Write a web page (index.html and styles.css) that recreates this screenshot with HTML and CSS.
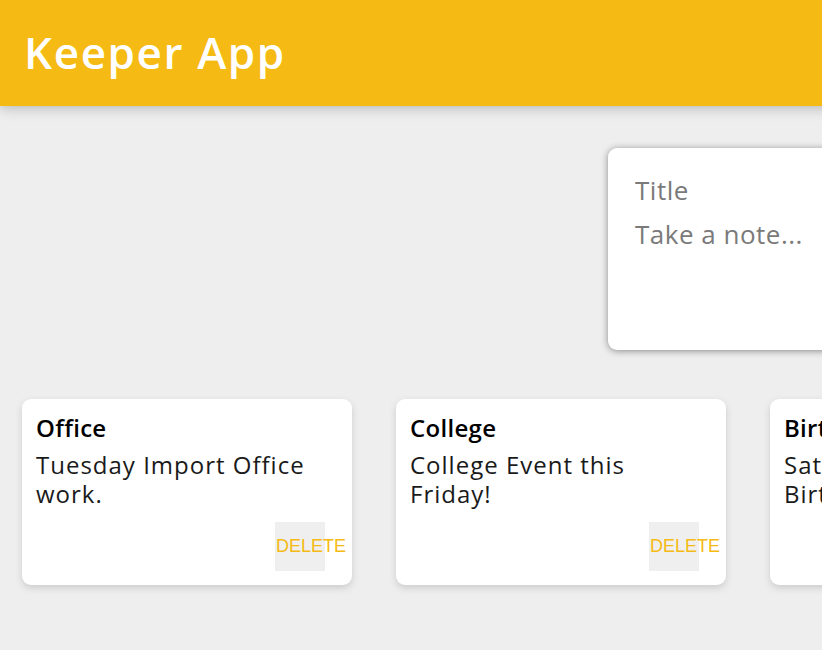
FILE: index.html
```html
<!DOCTYPE html>
<html lang="en">
<head>
<meta charset="utf-8">
<title>Keeper App</title>
<link rel="stylesheet" href="styles.css">
</head>
<body>
<div class="app">
  <header class="header">
    <h1 class="logo">Keeper App</h1>
  </header>
  <form class="create-note">
    <input class="create-title" name="title" placeholder="Title">
    <textarea class="create-content" name="content" placeholder="Take a note..." rows="3"></textarea>
  </form>
  <div class="notes">
    <div class="note">
      <h1 class="note-title">Office</h1>
      <p class="note-text">Tuesday Import Office work.</p>
      <div class="note-actions"><button class="delete" type="button">DELETE</button></div>
    </div>
    <div class="note">
      <h1 class="note-title">College</h1>
      <p class="note-text">College Event this Friday!</p>
      <div class="note-actions"><button class="delete" type="button">DELETE</button></div>
    </div>
    <div class="note">
      <h1 class="note-title">Birthday</h1>
      <p class="note-text">Saturday Friend's Birthday Party.</p>
      <div class="note-actions"><button class="delete" type="button">DELETE</button></div>
    </div>
  </div>
</div>
</body>
</html>
```
FILE: styles.css
```css
* {
  margin: 0;
  padding: 0;
  box-sizing: border-box;
}

html, body {
  overflow: hidden;
}

body {
  background: #eeeeee;
  font-family: "Open Sans", "Noto Sans", sans-serif;
  width: 822px;
  height: 650px;
}

.app {
  width: 1876px;
}

.header {
  background-color: #f5ba13;
  height: 106px;
  padding: 22px 24px 0;
  box-shadow: 0 0 14px 0 rgba(0, 0, 0, 0.3);
  position: relative;
}

.logo {
  color: #ffffff;
  font-family: "Open Sans", "Noto Sans", sans-serif;
  font-weight: 600;
  font-size: 44px;
  line-height: 60px;
  letter-spacing: 1.6px;
}

.create-note {
  width: 660px;
  height: 202px;
  margin: 42px auto 27px;
  background: #ffffff;
  padding: 21px;
  border-radius: 9px;
  box-shadow: 0 1px 7px rgb(138, 137, 137);
  display: flex;
  flex-direction: column;
}

.create-title,
.create-content {
  width: 100%;
  border: none;
  outline: none;
  padding: 5px 6px;
  font-family: "Open Sans", "Noto Sans", sans-serif;
  font-size: 26px;
  line-height: 32px;
  letter-spacing: 0.5px;
  color: #333;
  resize: none;
  background: transparent;
}

.create-title {
  margin-bottom: 2px;
}

.create-title::placeholder,
.create-content::placeholder {
  color: #7a7a7a;
}

.notes {
  display: flex;
  gap: 44px;
  padding: 22px;
}

.note {
  flex: 0 0 330px;
  background: #ffffff;
  border-radius: 9px;
  box-shadow: 0 3px 7px #cccccc;
  padding: 14px;
  height: 186px;
}

.note-title {
  font-size: 24px;
  font-weight: 600;
  line-height: 29px;
  letter-spacing: 0.3px;
  margin-bottom: 8px;
  color: #000;
}

.note-text {
  font-size: 24px;
  line-height: 29px;
  letter-spacing: 1px;
  color: #1a1a1a;
  margin-bottom: 14px;
}

.note-actions {
  display: flex;
  justify-content: flex-end;
  padding-right: 13px;
}

.delete {
  width: 50px;
  height: 49px;
  border: none;
  background: #efefef;
  color: #f5ba13;
  font-family: "Liberation Sans", Arial, sans-serif;
  font-size: 18px;
  padding: 0 0 0 1px;
  display: flex;
  align-items: center;
  justify-content: flex-start;
  overflow: visible;
  white-space: nowrap;
}
```
